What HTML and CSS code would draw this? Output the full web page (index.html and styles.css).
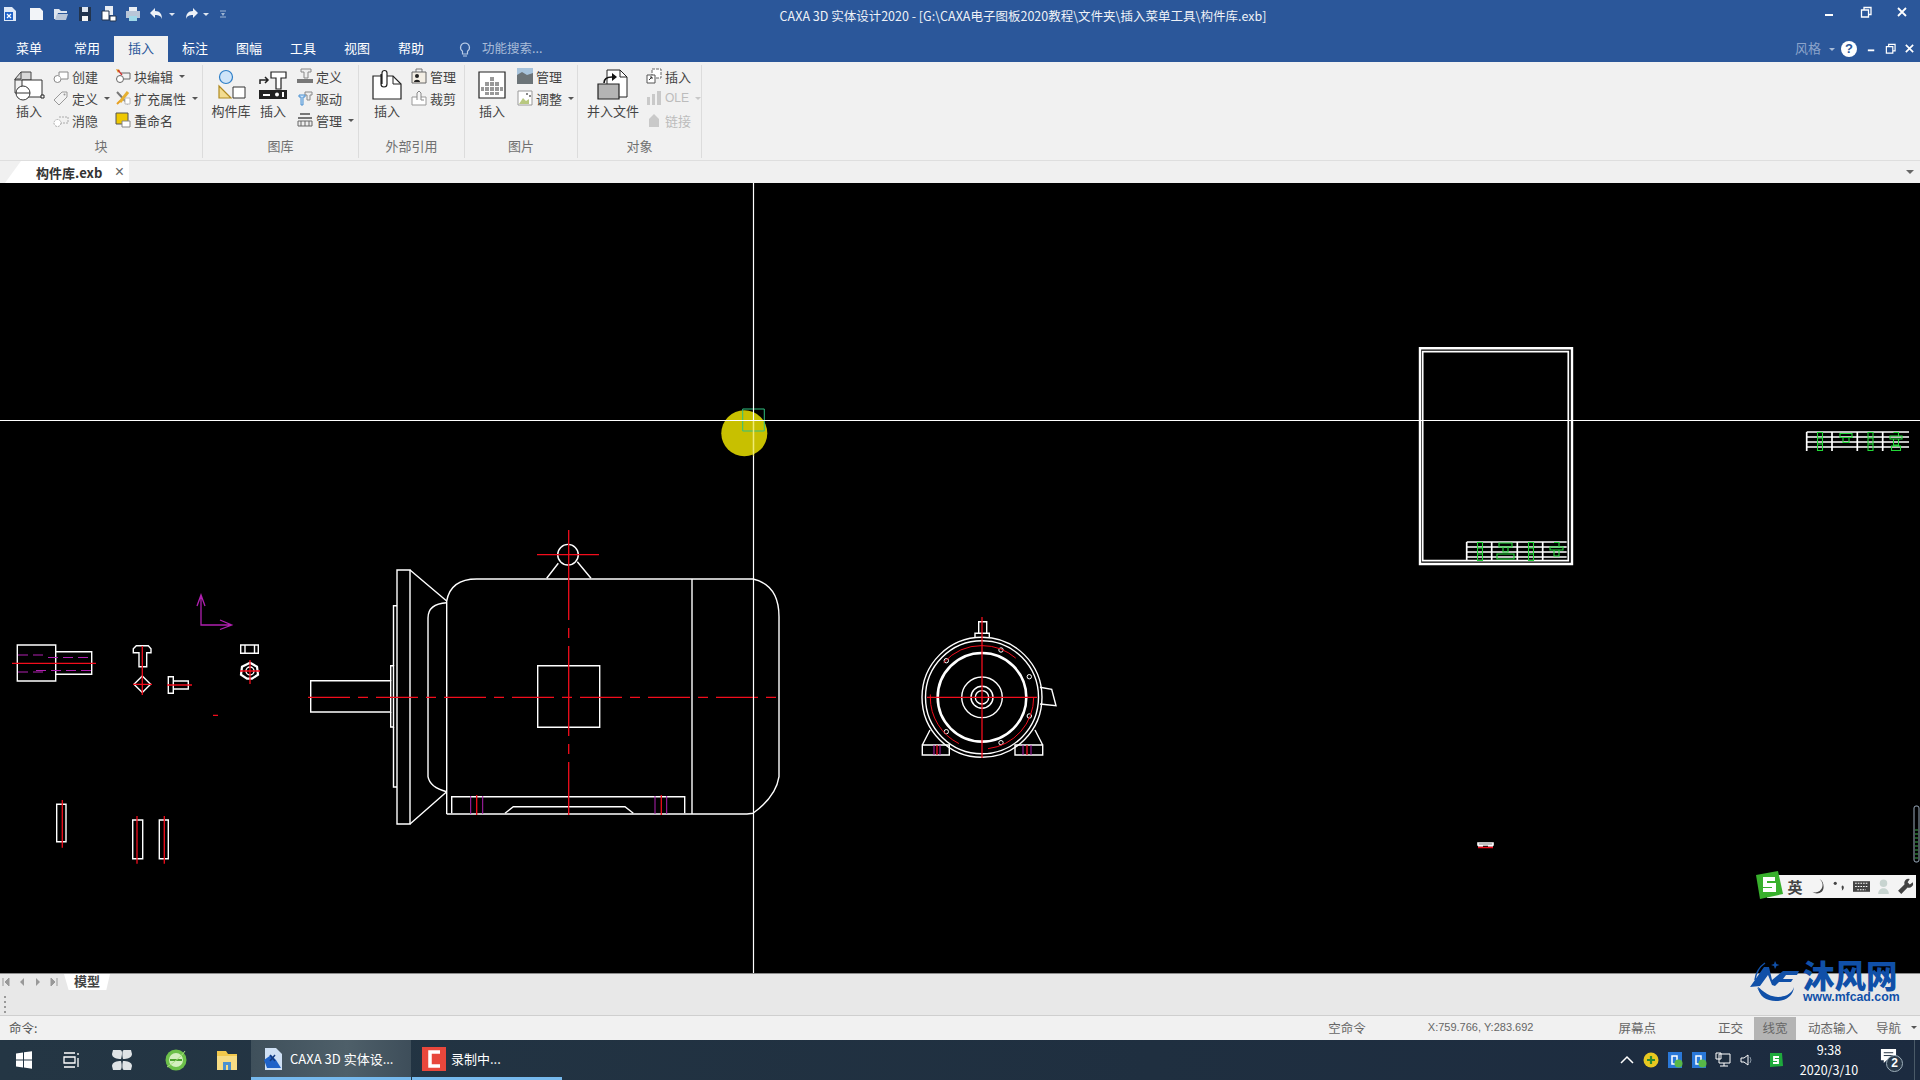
FILE: index.html
```html
<!DOCTYPE html>
<html lang="zh-CN">
<head>
<meta charset="utf-8">
<title>CAXA 3D 实体设计2020</title>
<link rel="stylesheet" href="styles.css">
</head>
<body>
<header class="titlebar">
  <div class="qat">
    <svg class="qi" viewBox="0 0 16 16"><path d="M2 1h8l4 4v10H2z" fill="#dfe9f7"/><path d="M3 6h8v8H3z" fill="#1f62c8"/><path d="M5 8l4 4M9 8l-4 4" stroke="#fff" stroke-width="1.2"/></svg>
    <svg class="qi" viewBox="0 0 16 16"><path d="M1 2h10l3 3v9H1z" fill="#f2f4f8"/></svg>
    <svg class="qi" viewBox="0 0 16 16"><path d="M1 3h5l2 2h6v2H5l-2 6H1z" fill="#dfe6f0"/><path d="M4 8h11l-2 6H2z" fill="#b9c6d8"/></svg>
    <svg class="qi" viewBox="0 0 16 16"><path d="M2 1h12v14H2z" fill="#22344e"/><path d="M5 1h6v5H5z" fill="#dfe6f0"/><path d="M5 10h6v5H5z" fill="#f4f4f4"/></svg>
    <svg class="qi" viewBox="0 0 16 16"><path d="M4 0h8v9H4z" fill="#e8edf4"/><path d="M1 5h7v9H1z" fill="#fff" stroke="#22344e"/><path d="M9 10h6v5H9z" fill="#fff" stroke="#22344e"/></svg>
    <svg class="qi" viewBox="0 0 16 16"><path d="M4 1h8v4H4z" fill="#e8edf4"/><path d="M1 5h14v7H1z" fill="#b9c6d8"/><path d="M4 10h8v5H4z" fill="#9fd8e8"/></svg>
    <svg class="qi" viewBox="0 0 16 16"><path d="M6 2L1 7l5 5V9c4 0 6 1 7 4 0-5-2-8-7-8z" fill="#eef2f8"/></svg>
    <i class="caret caret-light"></i>
    <svg class="qi" viewBox="0 0 16 16"><path d="M10 2l5 5-5 5V9C6 9 4 10 3 13c0-5 2-8 7-8z" fill="#eef2f8"/></svg>
    <i class="caret caret-light"></i>
    <svg class="qi-small" viewBox="0 0 8 10"><path d="M1 2h6M1 8h6" stroke="#9fb6d4"/><path d="M2 4h4L4 7z" fill="#9fb6d4"/></svg>
  </div>
  <div class="title">CAXA 3D 实体设计2020 - [G:\CAXA电子图板2020教程\文件夹\插入菜单工具\构件库.exb]</div>
  <div class="winctl">
    <svg class="wi" viewBox="0 0 12 12"><path d="M1 9h8" stroke="#fff" stroke-width="2"/></svg>
    <svg class="wi" viewBox="0 0 12 12"><path d="M1.5 4h7v7h-7zM4 4V1.5h7v7H8.500" fill="none" stroke="#fff" stroke-width="1.300"/></svg>
    <svg class="wi" viewBox="0 0 12 12"><path d="M2 2l8 8M10 2l-8 8" stroke="#fff" stroke-width="1.800"/></svg>
  </div>
</header>

<nav class="tabs">
  <span class="tab tab-first">菜单</span>
  <span class="tab">常用</span>
  <span class="tab tab-active">插入</span>
  <span class="tab">标注</span>
  <span class="tab">图幅</span>
  <span class="tab">工具</span>
  <span class="tab">视图</span>
  <span class="tab">帮助</span>
  <svg class="bulb" viewBox="0 0 12 16"><path d="M6 1a4.500 4.500 0 0 0-2.500 8.200V12h5V9.200A4.500 4.500 0 0 0 6 1zM4 14h4" fill="none" stroke="#b8cbe6" stroke-width="1.200"/></svg>
  <span class="search">功能搜索...</span>
  <span class="style-label">风格</span>
  <i class="caret caret-light caret-style"></i>
  <span class="help">?</span>
  <div class="mdictl">
    <svg class="wi-s" viewBox="0 0 12 12"><path d="M2 8h7" stroke="#fff" stroke-width="2"/></svg>
    <svg class="wi-s" viewBox="0 0 12 12"><path d="M1.500 4h7v7h-7zM4 4V1.500h7v7H8.500" fill="none" stroke="#fff" stroke-width="1.300"/></svg>
    <svg class="wi-s" viewBox="0 0 12 12"><path d="M2 2l8 8M10 2l-8 8" stroke="#fff" stroke-width="1.800"/></svg>
  </div>
</nav>

<section class="ribbon">
  <div class="group g-block">
    <div class="gbody">
      <div class="lbtn w42">
        <svg class="li" viewBox="0 0 32 32"><path d="M2 10l6-7h10v8H2z" fill="#d8d8d8" stroke="#444"/><path d="M2 10v14h8M8 3v7H2" fill="none" stroke="#444"/><path d="M9 11h20v17H9z" fill="#fff" stroke="#333"/><circle cx="10" cy="24" r="7" fill="#fff" stroke="#333"/><path d="M3 24h14" stroke="#333"/><path d="M28 26h3v3h-3z" fill="#fff" stroke="#222"/></svg>
        <span>插入</span>
      </div>
      <div class="col c62">
        <div class="sbtn"><svg class="si" viewBox="0 0 16 16"><circle cx="4.500" cy="11" r="3.500" fill="#fff" stroke="#888"/><path d="M6 4h9v7H8M6 4v3" fill="#fff" stroke="#888"/></svg><span>创建</span></div>
        <div class="sbtn"><svg class="si" viewBox="0 0 16 16"><path d="M9 2h5v5l-8 8-5-5z" fill="#f2f2f2" stroke="#999"/><circle cx="11.500" cy="4.500" r="1" fill="#999"/></svg><span>定义</span><i class="caret"></i></div>
        <div class="sbtn"><svg class="si" viewBox="0 0 16 16"><circle cx="4.500" cy="11" r="3.500" fill="#fff" stroke="#aaa" stroke-dasharray="2 1"/><path d="M6 5h9v6H8" fill="none" stroke="#aaa" stroke-dasharray="2 1"/></svg><span>消隐</span></div>
      </div>
      <div class="col">
        <div class="sbtn"><svg class="si" viewBox="0 0 16 16"><circle cx="5" cy="11" r="3.500" fill="#fff" stroke="#666"/><path d="M6 5h9v6H9" fill="none" stroke="#666"/><path d="M1 1l4 1-2 3z" fill="#e0a020"/><path d="M3 2l4 5" stroke="#c33" stroke-width="1.300"/></svg><span>块编辑</span><i class="caret"></i></div>
        <div class="sbtn"><svg class="si" viewBox="0 0 16 16"><path d="M2 2l11 12" stroke="#777" stroke-width="2"/><path d="M13 2L5 12" stroke="#e6b030" stroke-width="3"/><path d="M2 14l3-3" stroke="#e8a020" stroke-width="2"/><path d="M10 8h5v6h-5z" fill="#fff" stroke="#bbb"/></svg><span>扩充属性</span><i class="caret"></i></div>
        <div class="sbtn"><svg class="si" viewBox="0 0 16 16"><path d="M1 1h12v11H1z" fill="#efc800" stroke="#555"/><path d="M7 9h8v6H7z" fill="#fff" stroke="#888"/></svg><span>重命名</span></div>
      </div>
    </div>
    <div class="glabel">块</div>
  </div>

  <div class="group g-lib">
    <div class="gbody">
      <div class="lbtn w44">
        <svg class="li" viewBox="0 0 32 32"><circle cx="11" cy="8" r="6.500" fill="#cfe4f8" stroke="#2f7fc8" stroke-width="1.200"/><path d="M4 17l12 12H4z" fill="#f3dc90" stroke="#b08a20" stroke-width="1.200"/><path d="M18 18h12v11H18z" fill="#fff" stroke="#333"/></svg>
        <span>构件库</span>
      </div>
      <div class="lbtn w40">
        <svg class="li" viewBox="0 0 32 32"><path d="M14 3h15v6h-5v11h-5V9h-5z" fill="#fff" stroke="#222" stroke-width="1.200"/><path d="M3 15v-4h7M8 8l3 3-3 3" fill="none" stroke="#222" stroke-width="1.500"/><path d="M2 21h28v9H2z" fill="#222"/><path d="M6 25h7v2H6z" fill="#fff"/><circle cx="20" cy="25.500" r="2" fill="#fff"/><path d="M25 23h2v5h-2z" fill="#fff"/></svg>
        <span>插入</span>
      </div>
      <div class="col col-lib">
        <div class="sbtn"><svg class="si" viewBox="0 0 16 16"><path d="M4 1h10v3h-3v6H7V4H4z" fill="#eee" stroke="#888"/><path d="M0 11h16v4H0z" fill="#777"/></svg><span>定义</span></div>
        <div class="sbtn"><svg class="si" viewBox="0 0 16 16"><path d="M8 2h7v3h-2v5h-3V5H8z" fill="#eee" stroke="#888"/><path d="M2 5h6v2H6v8H4V7H2z" fill="#cfe4f8" stroke="#4a90d0"/></svg><span>驱动</span></div>
        <div class="sbtn"><svg class="si" viewBox="0 0 16 16"><path d="M3 2h10M1 6h14" stroke="#777" stroke-width="2"/><path d="M1 9h14v5H1z" fill="#eee" stroke="#666"/><path d="M4 9v5M8 9v5M12 9v5" stroke="#666"/></svg><span>管理</span><i class="caret"></i></div>
      </div>
    </div>
    <div class="glabel">图库</div>
  </div>

  <div class="group g-ext">
    <div class="gbody">
      <div class="lbtn w40">
        <svg class="li" viewBox="0 0 32 32"><path d="M2 7h20l8 8v15H2z" fill="#fff" stroke="#222" stroke-width="1.200"/><path d="M22 7v8h8" fill="none" stroke="#222"/><path d="M11 15V4a2.500 2.500 0 0 1 5 0v11a3 3 0 0 1-6 0V5" fill="#fff" stroke="#222" stroke-width="1.200"/></svg>
        <span>插入</span>
      </div>
      <div class="col">
        <div class="sbtn"><svg class="si" viewBox="0 0 16 16"><path d="M5 4V1h6v3" fill="none" stroke="#777"/><path d="M1 4h14v11H1z" fill="#f3eee4" stroke="#666"/><circle cx="6" cy="8" r="2" fill="#222"/><path d="M3 14c0-3 6-3 6 0z" fill="#222"/></svg><span>管理</span></div>
        <div class="sbtn"><svg class="si" viewBox="0 0 16 16"><path d="M1 7h14v8H1z" fill="#fff" stroke="#999"/><path d="M6 10V3l2-2 2 2v7h3" fill="#f6f6f6" stroke="#888"/></svg><span>裁剪</span></div>
      </div>
    </div>
    <div class="glabel">外部引用</div>
  </div>

  <div class="group g-pic">
    <div class="gbody">
      <div class="lbtn w40">
        <svg class="li dots" viewBox="0 0 32 32"><path d="M3 3h26v26H3z" fill="#fff" stroke="#222" stroke-width="1.200"/><g fill="#999"><path d="M14 8h4v4h-4z"/><path d="M14 13h4v4h-4zM9 13h4v4H9zM19 13h4v4h-4z"/><path d="M14 18h4v4h-4zM9 18h4v4H9zM19 18h4v4h-4zM24 18h3v4h-3zM5 18h3v4H5z"/><path d="M9 23h4v3H9zM14 23h4v3h-4zM19 23h4v3h-4z"/></g></svg>
        <span>插入</span>
      </div>
      <div class="col">
        <div class="sbtn"><svg class="si" viewBox="0 0 16 16"><path d="M0 0h16v8H0z" fill="#a8c4dc"/><path d="M0 7l5-3 5 3 6-2v11H0z" fill="#6c7478"/></svg><span>管理</span></div>
        <div class="sbtn"><svg class="si" viewBox="0 0 16 16"><path d="M1 1h14v14H1z" fill="#fff" stroke="#999"/><path d="M2 14l4-6 3 3 3-2v5z" fill="#b8c880"/><path d="M9 3h2v2H9zM12 5h2v2h-2z" fill="#888"/></svg><span>调整</span><i class="caret"></i></div>
      </div>
    </div>
    <div class="glabel">图片</div>
  </div>

  <div class="group g-obj">
    <div class="gbody">
      <div class="lbtn w60">
        <svg class="li" viewBox="0 0 32 32"><path d="M10 1h13l7 7v20H10z" fill="#fff" stroke="#222"/><path d="M23 1v7h7" fill="none" stroke="#222"/><path d="M1 15h21v15H1z" fill="#b4b4b4" stroke="#222" stroke-width="1.200"/><path d="M7 14c0-4 3-6 8-6" fill="none" stroke="#111" stroke-width="1.600"/><path d="M15 4l5 4-5 4z" fill="#111"/></svg>
        <span>并入文件</span>
      </div>
      <div class="col">
        <div class="sbtn"><svg class="si" viewBox="0 0 16 16"><path d="M6 1h9v9H6z" fill="#fff" stroke="#666" stroke-dasharray="3 1"/><path d="M1 7h8v8H1z" fill="#fff" stroke="#555"/><path d="M3 12l3-3M4 9h2v2" stroke="#333" fill="none"/></svg><span>插入</span></div>
        <div class="sbtn sbtn-off"><svg class="si" viewBox="0 0 16 16"><path d="M1 7h3v8H1zM6 4h3v11H6zM11 1h4v14h-4z" fill="#c9c9c9"/></svg><span class="ole">OLE</span><i class="caret caret-off"></i></div>
        <div class="sbtn sbtn-off"><svg class="si" viewBox="0 0 16 16"><path d="M3 7l5-5 5 5v8H3z" fill="#c9c9c9"/></svg><span>链接</span></div>
      </div>
    </div>
    <div class="glabel">对象</div>
  </div>
</section>

<div class="docbar">
  <div class="doctab"><span class="docname">构件库.exb</span><span class="docx">×</span></div>
  <i class="caret caret-doc"></i>
</div>

<main class="canvas">
  <svg class="drawing" viewBox="0 183 1920 790" xmlns="http://www.w3.org/2000/svg">
    <!-- motor side view -->
    <g class="w">
      <path d="M310.700 680.700h80v31.300h-80z"/>
      <path d="M390.700 712v15H393.500V665.700H390.700v15"/>
      <path d="M393.500 727v60H397M393.500 665.700V605.700H397"/>
      <path d="M397 570h13v254h-13z"/>
      <path d="M410 570l36.700 31M410 824l36.700-32.300"/>
      <path d="M446.700 814V601q4-22 30-22H753q26 6 26 37.700V776.700q-3 20-26 36.600l-6 .700H446.700"/>
      <path d="M692 579v235"/>
      <path d="M446.700 602.700q-18.700 1-18.700 15.300v158.700q2 11 18.700 15"/>
      <circle cx="568" cy="554.700" r="10.300"/>
      <path d="M558.300 563.300l-11.600 15M577.300 561.700l13.700 16.600"/>
      <path d="M537.700 665.700h62v61.600h-62z"/>
      <path d="M451.700 813.300v-16.600h233v16.600"/>
      <path d="M505 813.300l8.300-6.600H625l8.300 6.600"/>
    </g>
    <g class="r">
      <path class="dash" d="M308 697.300h475"/>
      <path class="dash-v" d="M568.700 530v285"/>
      <path d="M537 554.700h62"/>
      <path d="M476.700 795v20M661.300 795v20"/>
    </g>
    <path class="m" d="M470.700 796v18M482.700 796v18M655 796v18M666.700 796v18"/>

    <!-- motor front view -->
    <g class="w">
      <circle cx="982" cy="697.300" r="60"/>
      <circle cx="982" cy="697.300" r="56.500"/>
      <circle class="thick" cx="982" cy="697.300" r="44.300"/>
      <circle cx="982" cy="697.300" r="20.300"/>
      <circle cx="982" cy="697.300" r="11"/>
      <circle cx="982" cy="697.300" r="6.700"/>
      <path d="M978.700 633.300v-11.600h8v11.600M975 637.300v-4h14.300v4"/>
      <path d="M1040 687.300l11.700 2 4.300 16.400-16-1.700"/>
      <path d="M922.300 745h27v10h-27zM930 730l-7.700 15M1015 745h27.700v10H1015zM1035 730l7.700 15"/>
      <g class="sm">
        <circle cx="946.300" cy="660.700" r="2.200"/><circle cx="1001" cy="650" r="2.200"/><circle cx="1029.300" cy="676.700" r="2.200"/><circle cx="1029.300" cy="716" r="2.200"/><circle cx="1001" cy="742.700" r="2.200"/><circle cx="946.300" cy="731.700" r="2.200"/>
      </g>
    </g>
    <g class="r">
      <path d="M927 697.300h110M982 617v141"/>
      <circle class="arc" cx="982" cy="697.300" r="51.700"/>
      <path d="M937 745v10M1027 745v10"/>
    </g>
    <path class="m" d="M934 745v10M940 745v10M1023 745v10M1031 745v10"/>

    <!-- small parts -->
    <g class="w">
      <path d="M17.300 645h38.400v36H17.300zM55.700 651.700h36v22.600h-36z"/>
      <path d="M133.300 652.700v-4l3-3h12l2.700 3v4H146.700v14H139v-14z"/>
      <path d="M142.300 676l8.300 8.300-8.300 8.300-8.300-8.300z"/>
      <path d="M168.300 676.700h5v16.600h-5zM173.300 681h15v8h-15z"/>
      <path d="M240.700 645h17.600v8.300h-17.600zM245 645v8.300M254.500 645v8.300"/>
      <path class="nut" d="M250 662.700l7 4 1 8-6 4h-5l-6-4 1-8z"/>
      <circle cx="250" cy="671" r="4"/>
      <path d="M56.700 804.300H66v37.400h-9.300zM132.700 820h10v38.700h-10zM159.300 820h9v38.700h-9z"/>
      <path class="tiny" d="M1478 843h15v2h-15zM1478 846h5M1488 846h5"/>
    </g>
    <g class="r">
      <path d="M12 663.300h84M142.300 646v49M133 684.300h19M167 685h25M250 660v24M240 671h20"/>
      <path d="M62.300 800v47.700M137 816v47.700M164.300 816v47.700M213 715.300h5M1478 847.500h15"/>
    </g>
    <path class="m dashm" d="M18 655h30M48 657.500h44M18 672h30M36 670.500h56"/>
    <path class="ucs" d="M201 595v30h30.700M197 606l4-11 4 11M220 620l11.700 5-11.700 4.500"/>

    <!-- drawing frame and title blocks -->
    <path class="frame-o" d="M1420 348.300h152V564H1420z"/>
    <path class="frame-i" d="M1422.700 351.700h145.600v209h-145.600z"/>
    <path class="tbl" d="M1466.700 542h100M1466.700 547h100M1466.700 552h100M1466.700 557h100M1466.700 542v19M1491.700 542v19M1517.300 542v19M1542.700 542v19"/>
    <path class="tbl" d="M1806.700 432h102.300M1806.700 437h102.300M1806.700 442h102.300M1806.700 447h102.300M1806.700 432v19M1832 432v19M1857.300 432v19M1882.700 432v19"/>
    <g class="g">
      <path d="M1477.500 542.500h5v18h-5zM1477.500 548h5M1477.500 554h5"/>
      <path d="M1499 543h13v4h-13zM1503 547h5v5h-5zM1497 554h17v5h-17z"/>
      <path d="M1528.500 542.500h5v18h-5zM1528.500 548h5M1528.500 554h5"/>
      <path d="M1550 547h13v3h-13zM1554 542.500h5v4.500M1554 550h5v6h-5z"/>
      <path d="M1817.500 432.500h5v18h-5zM1817.500 438h5M1817.500 444h5"/>
      <path d="M1840 433.500h12v4h-12zM1843 437.500h6v5h-6z"/>
      <path d="M1868 432.500h5v18h-5zM1868 438h5M1868 444h5"/>
      <path d="M1890 436h12v3h-12zM1893.500 432.500h5v3.500M1893.500 439h5v6h-5zM1891.500 446h9v4.500h-9z"/>
    </g>
    <rect class="sidebar" x="1914" y="806" width="5" height="56" rx="2"/>
    <path class="sideg" d="M1915 830h3M1915 834h3M1915 838h3M1915 842h3M1915 846h3M1915 850h3M1915 854h3M1915 858h3"/>

    <!-- cursor -->
    <circle class="spot" cx="744.300" cy="433.300" r="23"/>
    <path class="pick" d="M742.700 409h21.600v22h-21.600z"/>
    <path class="cross" d="M753.500 183v790M0 420.500h1920"/>
    <path class="cross-in" d="M753.500 421v35"/>
  </svg>
</main>

<div class="modelbar">
  <div class="modelrow">
    <div class="nav">
      <svg class="navi" viewBox="0 0 8 10"><path d="M1 1v8M7 1L3 5l4 4z" fill="#999" stroke="#999"/></svg>
      <svg class="navi" viewBox="0 0 8 10"><path d="M6 1L2 5l4 4z" fill="#999"/></svg>
      <svg class="navi" viewBox="0 0 8 10"><path d="M2 1l4 4-4 4z" fill="#999"/></svg>
      <svg class="navi" viewBox="0 0 8 10"><path d="M7 1v8M1 1l4 4-4 4z" fill="#999" stroke="#999"/></svg>
    </div>
    <div class="modeltab"><span>模型</span></div>
  </div>
  <div class="grip"><i></i><i></i><i></i><i></i></div>
</div>

<footer class="status">
  <span class="st-cmd">命令:</span>
  <span class="st-a">空命令</span>
  <span class="st-b">X:759.766, Y:283.692</span>
  <span class="st-c">屏幕点</span>
  <span class="st-d">正交</span>
  <span class="st-e">线宽</span>
  <span class="st-f">动态输入</span>
  <span class="st-g">导航</span>
  <i class="caret"></i>
</footer>

<div class="taskbar">
  <div class="tb w47"><svg class="ti" viewBox="0 0 18 18"><path d="M1 2.500l7-1v7H1zM9 1.300l8-1.100V8.500H9zM1 9.500h7v7l-7-1zM9 9.500h8v8.200l-8-1.100z" fill="#fff"/></svg></div>
  <div class="tb w48"><svg class="ti" viewBox="0 0 18 18"><path d="M2 2h11M2 16h11M2 6h11v6H2zM16 2v2M16 7v9" fill="none" stroke="#fff" stroke-width="1.300"/></svg></div>
  <div class="tb w54"><svg class="tl" viewBox="0 0 24 24"><g fill="#dfe3e6"><path d="M3 2h7c3 0 2 5 1 9-4 0-9-1-9-5z"/><path d="M21 2h-7c-2 0-2 5-1 9 4 0 9-1 9-5z"/><path d="M3 22h7c2 0 2-5 1-9-4 0-9 1-9 5z"/><path d="M21 22h-7c-2 0-2-5-1-9 4 0 9 1 9 5z"/></g></svg></div>
  <div class="tb w54"><svg class="tl" viewBox="0 0 24 24"><circle cx="12" cy="12" r="10.500" fill="#6cc04a"/><circle cx="12" cy="12" r="7" fill="#d4efc0"/><path d="M6 11h12v2H6z" fill="#4ba030"/><path d="M3 19C8 16 18 8 21 3" stroke="#a9e080" fill="none"/></svg></div>
  <div class="tb w48"><svg class="tl" viewBox="0 0 24 24"><path d="M2 3h9l2 3h9v16H2z" fill="#f2c84c"/><path d="M2 8h20v14H2z" fill="#f7dc84"/><path d="M8 14h8v8H8z" fill="#4a90d0"/><path d="M11 17h2v5h-2z" fill="#f7dc84"/></svg></div>
  <div class="task task-active">
    <svg class="tl" viewBox="0 0 24 24"><path d="M4 1h11l6 6v16H4z" fill="#cfe0f4"/><path d="M3 13l7-5 5 5 5 8H6z" fill="#1f62c8"/><path d="M9 8l5 6M14 8l-5 6" stroke="#123a80" stroke-width="1.500"/></svg>
    <span>CAXA 3D 实体设...</span>
  </div>
  <div class="task task-open">
    <svg class="tl" viewBox="0 0 24 24"><path d="M0 0h24v24H0z" fill="#e8473c"/><path d="M18 5H8v14h10" fill="none" stroke="#fff" stroke-width="3.500"/></svg>
    <span>录制中...</span>
  </div>
  <div class="tray">
    <svg class="trayi" viewBox="0 0 16 16"><path d="M2 11l6-6 6 6" fill="none" stroke="#fff" stroke-width="1.500"/></svg>
    <svg class="trayi" viewBox="0 0 16 16"><circle cx="8" cy="8" r="7.500" fill="#e8c820"/><path d="M8 4v8M4 8h8" stroke="#2c8a30" stroke-width="2.200"/></svg>
    <svg class="trayi" viewBox="0 0 16 16"><path d="M1 0h14v16H1z" fill="#2a78d8"/><path d="M5 4h5v8H5z" fill="none" stroke="#fff" stroke-width="1.500"/><circle cx="11.500" cy="11.500" r="4" fill="#58b848"/></svg>
    <svg class="trayi" viewBox="0 0 16 16"><path d="M1 0h14v16H1z" fill="#2a78d8"/><path d="M5 4h5v8H5z" fill="none" stroke="#fff" stroke-width="1.500"/><circle cx="11.500" cy="11.500" r="4" fill="#58b848"/></svg>
    <svg class="trayi" viewBox="0 0 16 16"><path d="M4 2h11v9H4zM9 11v3M5 14h8M1 1h5v6H1z" fill="#1c2b3c" stroke="#fff"/></svg>
    <svg class="trayi" viewBox="0 0 16 16"><path d="M2 6h3l4-3v10L5 10H2z" fill="none" stroke="#fff"/><path d="M11 5q2 3 0 6" fill="none" stroke="#8896a4"/></svg>
    <svg class="trayi tray-s" viewBox="0 0 16 16"><path d="M2 1h12l1 13-13 1z" fill="#1eaa3c"/><path d="M11 5H6v3h4v3H5" fill="none" stroke="#fff" stroke-width="1.800"/></svg>
    <div class="clock"><span>9:38</span><span>2020/3/10</span></div>
    <div class="notice">
      <svg class="noticei" viewBox="0 0 18 18"><path d="M1 1h16v12H7l-3 3v-3H1z" fill="#fff"/><path d="M4 5h10M4 8h10" stroke="#1c2b3c"/></svg>
      <b class="badge">2</b>
    </div>
    <i class="desk-line"></i>
  </div>
</div>

<div class="ime">
  <svg class="ime-s" viewBox="0 0 30 30"><path d="M2 5l22-4 5 23-23 5z" fill="#38b02c"/><path d="M21 9H11v6h9v5H9" fill="none" stroke="#fff" stroke-width="4"/></svg>
  <span class="ime-t">英</span>
  <svg class="ime-i" viewBox="0 0 16 16"><path d="M10 1a7 7 0 0 1-7 12 7 7 0 0 0 9 0c3-3 2-10-2-12z" fill="#444"/></svg>
  <svg class="ime-i" viewBox="0 0 16 16"><circle cx="4" cy="5" r="1.500" fill="#444"/><path d="M11 7c2 1 1 4-1 5 1-1 0-2 0-3s0-2 1-2z" fill="#444"/></svg>
  <svg class="ime-i" viewBox="0 0 16 16"><path d="M0 3h16v10H0z" fill="#444"/><path d="M2 5h12M2 8h12M4 11h8" stroke="#fff" stroke-dasharray="1.500 1"/></svg>
  <svg class="ime-i" viewBox="0 0 16 16"><circle cx="8" cy="5" r="3.500" fill="#c8d4d0"/><path d="M3 15c0-7 10-7 10 0z" fill="#c8d4d0"/></svg>
  <svg class="ime-i" viewBox="0 0 16 16"><path d="M15 4l-3 2-2-2 2-3a4 4 0 0 0-5 5L1 12l3 3 6-6a4 4 0 0 0 5-5z" fill="#444"/></svg>
</div>

<div class="logo">
  <svg class="logo-mark" viewBox="0 0 50 42"><path d="M7 27a19 15 0 0 0 37 0c-3 8-8 10-16 10S12 35 7 27z" fill="#1050a8"/><path d="M8 27c-1-2 8 10 20 10 10 0 15-6 16-10-1 9-8 14-18 14S9 36 8 27z" fill="#1050a8"/><path d="M15 3C9 7 6 13 5 20" fill="none" stroke="#1050a8" stroke-width="1.500"/><path d="M0 27L14 7h5l3 13L33 11h16l-2 4H36l-3 4h10l-2 3H29l-4 4-3-1-4-10-8 11z" fill="#1050a8"/><path d="M25 1l1.500 3 3 1-3 1-1.500 3-1-3-3-1 3-1z" fill="#1050a8"/></svg>
  <div class="logo-text"><strong>沐风网</strong><em>www.mfcad.com</em></div>
</div>
</body>
</html>
```

FILE: styles.css
```css
* { box-sizing: border-box; }
html, body { margin: 0; height: 100%; }
body {
  width: 1920px; height: 1080px; overflow: hidden; position: relative;
  display: flex; flex-direction: column;
  font-family: "Noto Sans CJK SC", "Liberation Sans", sans-serif;
  font-size: 13px; color: #444; background: #000;
}
svg { display: block; flex: none; }
i, em { font-style: normal; }

.caret { display: inline-block; width: 0; height: 0; border: 3px solid transparent; border-top: 3.500px solid #555; border-bottom: 0; margin-left: 3px; flex: none; }
.caret-light { border-top-color: #dfe6f0; }
.caret-off { border-top-color: #c8c8c8; }

/* title bar */
.titlebar { height: 36px; flex: none; background: #2b579a; display: flex; align-items: flex-start; }
.qat { width: 230px; flex: none; display: flex; align-items: center; padding: 6px 0 0 2px; gap: 8px; }
.qi { width: 16px; height: 16px; }
.qi:first-child { margin-right: 3px; }
.qi-small { width: 8px; height: 10px; margin-left: 2px; }
.qat .caret { margin: 0 0 0 -4px; }
.title { flex: 1; text-align: center; color: #fff; font-size: 12.500px; line-height: 1; white-space: nowrap; opacity: .92; padding-top: 10px; }
.winctl { width: 104px; flex: none; display: flex; justify-content: flex-end; padding: 6px 12px 0 0; gap: 24px; }
.wi { width: 12px; height: 12px; }

/* tab row */
.tabs { height: 26px; flex: none; background: #2b579a; display: flex; align-items: stretch; color: #fff; }
.tab { width: 54px; text-align: center; line-height: 24px; font-size: 13px; }
.tab-first { width: 58px; margin-right: 2px; }
.tab-active { background: #f1f1f1; color: #2b579a; }
.bulb { width: 12px; height: 16px; margin: 6px 0 0 21px; }
.search { margin-left: 11px; line-height: 24px; color: #a9bcd8; font-size: 12.500px; }
.style-label { margin-left: auto; line-height: 24px; color: #8ba4cb; font-size: 13px; }
.caret-style { align-self: center; margin-left: 8px; border-top-color: #a9bcd8; }
.help { width: 16px; height: 16px; margin: 5px 0 0 6px; border-radius: 50%; background: #fff; color: #2b579a; font: bold 13px/16px "Liberation Sans", sans-serif; text-align: center; }
.mdictl { display: flex; gap: 8px; padding: 7px 5px 0 9px; }
.wi-s { width: 11px; height: 11px; }

/* ribbon */
.ribbon { height: 98px; flex: none; background: #f1f1f1; display: flex; padding-top: 3px; }
.group { display: flex; flex-direction: column; border-right: 1px solid #dcdcdc; height: 93px; }
.g-block { width: 203px; }
.g-lib { width: 156px; }
.g-ext { width: 106px; }
.g-pic { width: 113px; }
.g-obj { width: 124px; }
.g-block .gbody { padding-left: 8px; }
.g-lib .gbody { padding-left: 6px; }
.g-ext .gbody { padding-left: 8px; }
.g-pic .gbody { padding-left: 7px; }
.g-obj .gbody { padding-left: 5px; }
.gbody { display: flex; height: 70px; flex: none; }
.glabel { height: 22px; line-height: 22px; text-align: center; color: #707070; font-size: 13px; }
.lbtn { display: flex; flex-direction: column; align-items: center; color: #444; padding-top: 4px; flex: none; }
.lbtn span { line-height: 18px; margin-top: 1px; white-space: nowrap; }
.w40 { width: 40px; } .w42 { width: 42px; } .w44 { width: 44px; } .w60 { width: 60px; }
.li { width: 32px; height: 32px; }
.col { display: flex; flex-direction: column; margin-left: 4px; flex: none; }
.c62 { width: 62px; margin-left: 3px; }
.c62 + .col { margin-left: 0; }
.col-lib { margin-left: 4px; }
.g-pic .col { margin-left: 5px; }
.g-obj .col { margin-left: 3px; }
.sbtn { height: 22px; display: flex; align-items: center; gap: 3px; white-space: nowrap; }
.si { width: 16px; height: 16px; }
.sbtn-off { color: #bcbcbc; }
.ole { font-family: "Liberation Sans", sans-serif; font-size: 12px; }

/* document tabs */
.docbar { height: 23px; flex: none; background: #f0f0f0; border-top: 1px solid #dedede; display: flex; align-items: center; position: relative; }
.doctab { width: 124px; height: 22px; margin-left: 5px; background: #fff; clip-path: polygon(16px 0, 100% 0, 100% 100%, 0 100%); display: flex; align-items: center; padding-left: 31px; }
.docname { font-weight: 700; color: #333; font-size: 13px; }
.docx { margin-left: auto; margin-right: 5px; color: #666; font: 16px/1 "Liberation Sans", sans-serif; }
.caret-doc { margin-left: auto; margin-right: 6px; border-top-color: #666; border-width: 4px; border-bottom: 0; }

/* canvas */
.canvas { height: 790px; flex: none; background: #000; }
.drawing { width: 1920px; height: 790px; }
.w { fill: none; stroke: #fff; stroke-width: 1.400; }
.w .thick { stroke-width: 2.600; }
.w .sm { stroke-width: 1; }
.w .tiny { stroke-width: 1.600; }
.w .nut { stroke-width: 2.200; }
.r { fill: none; stroke: #f20d1c; stroke-width: 1.300; }
.r .dash { stroke-dasharray: 42 8 10 8; }
.r .dash-v { stroke-dasharray: 90 8 10 8; }
.r .arc { stroke-dasharray: 75 30 60 35 80 45; stroke-width: 1; }
.m { fill: none; stroke: #b020b0; stroke-width: 1; }
.dashm { stroke-dasharray: 10 5; }
.ucs { fill: none; stroke: #b020b0; stroke-width: 1.300; }
.frame-o { fill: none; stroke: #fff; stroke-width: 2.400; }
.frame-i { fill: none; stroke: #fff; stroke-width: 1.700; }
.tbl { fill: none; stroke: #fff; stroke-width: 1.700; }
.g { fill: none; stroke: #22d838; stroke-width: 1.100; }
.sidebar { fill: #000; stroke: #9ab; stroke-width: 1; }
.sideg { stroke: #3fae4a; stroke-width: 1; }
.spot { fill: #c8c000; }
.pick { fill: none; stroke: #30c080; stroke-width: 1; }
.cross { fill: none; stroke: #fff; stroke-width: 1.200; }
.cross-in { stroke: #f0ec70; stroke-width: 1.200; }

/* model tab bar */
.modelbar { height: 43px; flex: none; background: #e8e8e8; border-bottom: 1px solid #cfcfcf; border-top: 1px solid #8c8c8c; }
.modelrow { height: 18px; display: flex; }
.nav { display: flex; align-items: flex-start; gap: 8px; padding: 3px 0 0 2px; width: 64px; }
.navi { width: 8px; height: 10px; }
.modeltab { width: 46px; height: 16px; background: #fff; clip-path: polygon(0 0, 100% 0, 92% 100%, 10% 100%); text-align: center; }
.modeltab span { font-weight: 700; font-size: 13px; line-height: 13px; color: #444; display: block; }
.grip { display: flex; flex-direction: column; gap: 3px; padding: 4px 0 0 4px; }
.grip i { width: 2px; height: 2px; background: #999; }

/* status */
.status { height: 24px; flex: none; background: #f1f1f1; display: flex; align-items: center; font-size: 12.500px; color: #666; padding-bottom: 2px; }
.status span { white-space: nowrap; }
.st-cmd { margin-left: 9px; color: #555; }
.st-a { margin-left: auto; }
.st-b { margin-left: 62px; font: 11px "Liberation Sans", sans-serif; }
.st-c { margin-left: 85px; }
.st-d { margin-left: 62px; }
.st-e { margin: 2px 0 0 11px; width: 42px; height: 23px; line-height: 21px; text-align: center; background: #b4b4b4; }
.st-f { margin-left: 12px; }
.st-g { margin-left: 18px; }
.status .caret { margin: 0 3px 0 10px; }

/* taskbar */
.taskbar { height: 40px; flex: none; background: linear-gradient(90deg, #243644, #1f2f40 60%, #1c2b40); display: flex; align-items: stretch; color: #fff; font-size: 12.500px; }
.tb { display: flex; align-items: center; justify-content: center; flex: none; }
.w47 { width: 47px; } .w48 { width: 48px; } .w54 { width: 54px; }
.ti { width: 18px; height: 18px; }
.tl { width: 24px; height: 24px; }
.task { display: flex; align-items: center; gap: 5px; flex: none; border-bottom: 3px solid #76b9ed; white-space: nowrap; font-size: 13px; }
.task-active { width: 160px; padding-left: 10px; background: linear-gradient(90deg, #3f505b, #4e5f69 60%, #3e4e5a); margin-right: 1px; }
.task-open { width: 150px; padding-left: 10px; }
.tray { margin-left: auto; display: flex; align-items: center; padding-right: 5px; }
.trayi { width: 16px; height: 16px; margin-right: 8px; }
.tray-s { margin-left: 5px; margin-right: 0; }
.clock { width: 70px; margin-left: 10px; display: flex; flex-direction: column; align-items: center; font-size: 12.500px; line-height: 20px; }
.notice { position: relative; width: 20px; height: 24px; margin-left: 16px; }
.noticei { width: 17px; height: 17px; }
.badge { position: absolute; left: 6px; top: 7px; width: 17px; height: 17px; border-radius: 50%; border: 1.500px solid #9fb0bc; background: #2a3a4a; font: bold 12px/14px "Liberation Sans", sans-serif; text-align: center; }
.desk-line { width: 1px; height: 40px; background: #4a5a68; margin-left: 14px; }

/* overlays */
.ime { position: absolute; left: 1753px; top: 874px; width: 163px; height: 25px; display: flex; align-items: center; }
.ime::before { content: ""; position: absolute; left: 14px; right: 0; top: 1px; bottom: 1px; background: #f4f4f4; }
.ime > * { position: relative; }
.ime-s { width: 32px; height: 30px; margin-top: -3px; }
.ime-t { width: 20px; text-align: center; font-size: 15px; font-weight: 700; color: #444; }
.ime-i { width: 17px; height: 17px; margin-left: 5px; }
.ime-t + .ime-i { margin-left: 4px; }
.logo { position: absolute; left: 1750px; top: 958px; display: flex; gap: 3px; }
.logo-mark { width: 50px; height: 42px; margin-top: 2px; }
.logo-text { display: flex; flex-direction: column; color: #1050a8; font-family: "Liberation Sans", "Noto Sans CJK SC", sans-serif; }
.logo-text strong { font: 900 31.500px/33px "Noto Sans CJK SC", sans-serif; white-space: nowrap; }
.logo-text em { font-weight: 700; font-size: 12.300px; line-height: 12px; white-space: nowrap; }
```
